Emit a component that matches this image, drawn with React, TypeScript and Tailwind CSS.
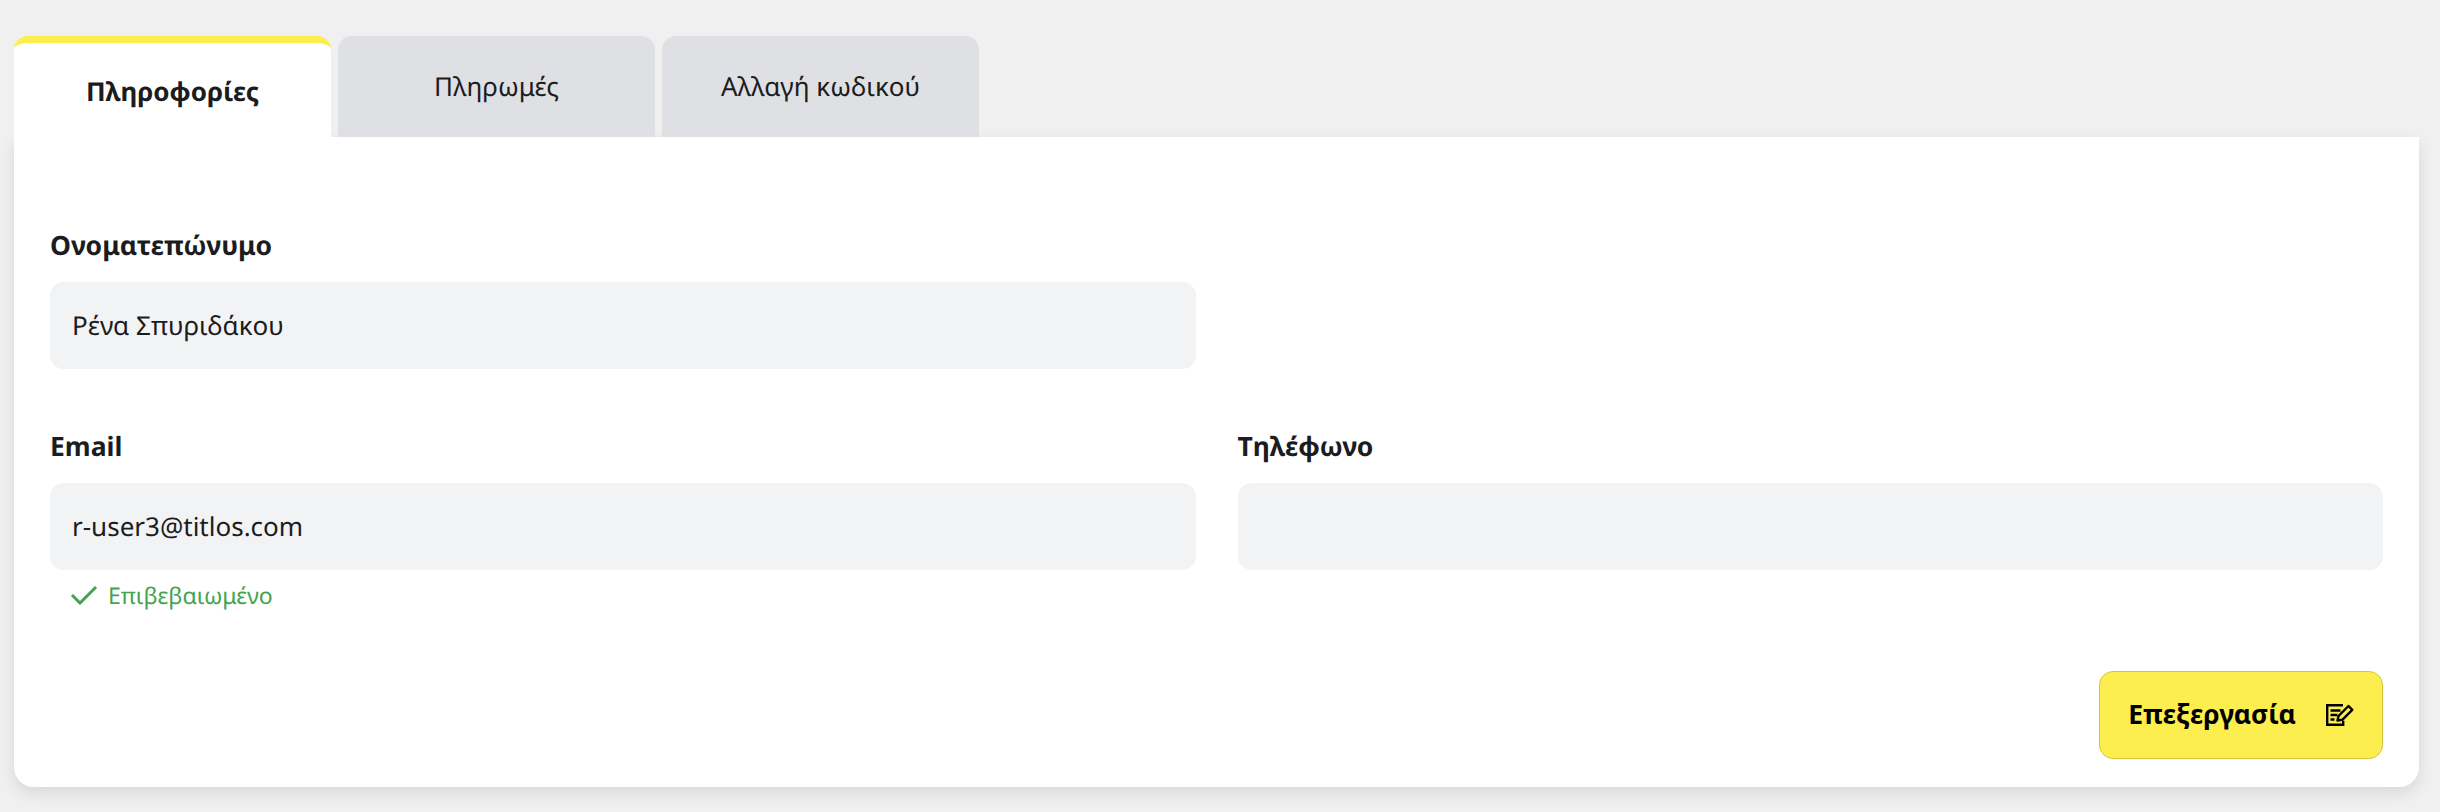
const font = { fontFamily: '"Noto Sans", sans-serif' };

const tabs = [
  { label: 'Πληροφορίες', active: true },
  { label: 'Πληρωμές', active: false },
  { label: 'Αλλαγή κωδικού', active: false },
];

const Field = ({ label, value, children }: { label: string; value?: string; children?: React.ReactNode }) => (
  <div className="flex flex-col">
    <label className="text-[26.5px] leading-[36px] font-bold text-[#1c1c1e] mb-[19px]">{label}</label>
    <div className="h-[87px] rounded-[14px] bg-[#f2f3f5] px-[22px] flex items-center text-[26px] text-[#1c1c1e]">
      {value}
    </div>
    {children}
  </div>
);

const EditIcon = () => (
  <svg width="28" height="22" viewBox="0 0 28 22" fill="none" stroke="#000" strokeWidth="2.4">
    <path d="M17 1.2H1.2v19.6h16v-4" />
    <path d="M4.5 6.5h10M4.5 11h7M4.5 15.5h4" />
    <path d="M11.5 16.5l1-4.5L22.5 2l3.8 3.8-10 10z" strokeLinejoin="round" />
  </svg>
);

export default function App() {
  return (
    <div style={font} className="min-h-[812px] bg-[#f0f0f0] px-[14px] pt-[36px] [text-rendering:geometricPrecision]">
      <div className="flex gap-[7px]">
        {tabs.map((t) => (
          <div
            key={t.label}
            className={
              t.active
                ? 'w-[317px] h-[101px] pt-[3px] rounded-t-[14px] bg-white border-t-[7px] border-[#fdee4f] flex items-center justify-center text-[26px] font-bold text-[#1c1c1e]'
                : 'w-[317px] h-[101px] rounded-t-[14px] bg-[#dfe0e4] flex items-center justify-center text-[26px] text-[#1c1c1e]'
            }
          >
            {t.label}
          </div>
        ))}
      </div>
      <div className="w-[2405px] h-[650px] bg-white rounded-b-[20px] shadow-[0_6px_16px_rgba(0,0,0,0.1)] px-[36px] pt-[90px]">
        <div className="grid grid-cols-2 gap-x-[42px]">
          <Field label="Ονοματεπώνυμο" value="Ρένα Σπυριδάκου" />
          <div />
        </div>
        <div className="grid grid-cols-2 gap-x-[42px] mt-[59px]">
          <Field label="Email" value="r-user3@titlos.com">
            <div className="flex items-center gap-[10px] pl-[20px] mt-[10px] text-[23px] leading-[30px] text-[#43a34f]">
              <svg width="28" height="20" viewBox="0 0 28 20" fill="none" stroke="#43a34f" strokeWidth="3">
                <path d="M2 10l8 8L26 2" />
              </svg>
              Επιβεβαιωμένο
            </div>
          </Field>
          <Field label="Τηλέφωνο" />
        </div>
        <div className="flex justify-end mt-[61px]">
          <button className="w-[284px] h-[88px] rounded-[14px] bg-[#fdee4f] border border-[#d4c63c] flex items-center justify-center gap-[30px] text-[26.5px] font-bold text-black">
            Επεξεργασία
            <EditIcon />
          </button>
        </div>
      </div>
    </div>
  );
}
